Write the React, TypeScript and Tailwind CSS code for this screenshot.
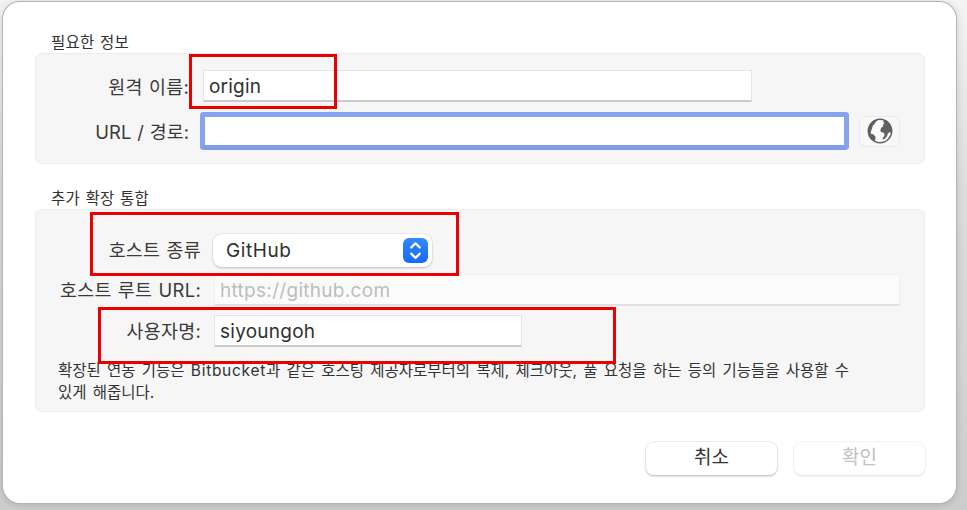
import type { ReactNode } from "react";

function GroupTitle({ children }: { children: ReactNode }) {
  return <h2 className="ml-4 h-[22px] whitespace-pre pt-px text-[15.5px] leading-[22px] tracking-[0.2px] text-[#333] [word-spacing:1px]">{children}</h2>;
}

function Label({ children }: { children: ReactNode }) {
  return <span className="whitespace-pre text-right text-[18.4px] leading-6 tracking-[0.3px] text-[#3a3a3a] [word-spacing:0.8px]">{children}</span>;
}

function Globe() {
  return (
    <svg width="26" height="26" viewBox="0 0 26 26">
      <circle cx="13" cy="13" r="11.7" fill="#fbfbfb" stroke="#606060" strokeWidth="1.5" />
      <path
        d="M9.500 1.800C4.500 3.200 1.300 7.800 1.300 13c0 4.500 2.500 8.500 6.200 10.500L8.600 20.500l-.4-2.200-2.600-2.200-2-.4.4-2.700 1-2.200.8-3 1.400-1.500L8.800 4l2-1.900z"
        fill="#606060"
      />
      <path
        d="M14 1.300l3 1-.8 1.800 1.300 1.200-1.600 1.500.4 1.400-2.100 1.600-.8 2.200.5 2 2.100.5 1.400 1.100-.1 2.300-1.500 2 .3 1.700 1.600-.7 2.400-2.800.6-2.400 1.800-1.800 1.600 1 .5-2.800C24.300 6 19.500 1.300 14 1.300z"
        fill="#606060"
      />
    </svg>
  );
}

export default function App() {
  return (
    <div className="relative flex h-[510px] w-[967px] overflow-hidden bg-[linear-gradient(180deg,#f4f4f4_0%,#dedede_35%,#cdcdcd_100%)] font-['Inter','Noto_Sans_CJK_KR',sans-serif]">
      <main className="ml-[3px] mt-[2px] flex h-[501px] w-[953px] flex-col rounded-[17px] bg-white px-8 pt-[29px] shadow-[0_0_0_1px_#b4b4b4,0_1px_8px_rgba(0,0,0,0.18)]">
        <GroupTitle>필요한 정보</GroupTitle>
        <section className="flex h-[111px] w-[890px] flex-col rounded-[7px] border border-[#ececec] bg-[#f6f6f6] pt-4">
          <div className="flex h-8 items-center">
            <div className="flex w-[153px] justify-end pt-px"><Label>원격 이름:</Label></div>
            <div className="ml-[14px] flex h-8 w-[549px] items-center border border-b-2 border-[#e5e5e5] border-b-[#cacaca] bg-white pl-[5px] pt-[3px] text-[19px] tracking-[0.2px] text-[#303030]">
              <span>origin</span>
            </div>
          </div>
          <div className="mt-[10px] flex h-[38px] items-center">
            <div className="flex w-[153px] justify-end pt-[2px]"><Label><span className="tracking-[0px]">URL / 경로:</span></Label></div>
            <div className="ml-[11px] h-[38px] w-[649px] rounded-[4px] border-[5px] border-[#87a3f0] border-b-[#829ce5] bg-white" />
            <button className="ml-[10px] flex h-[31px] w-[41px] items-center justify-center rounded-[7px] border border-[#eaeaea] bg-[#f8f8f8]">
              <Globe />
            </button>
          </div>
        </section>

        <div className="h-[23px]" />
        <GroupTitle>추가 확장 통합</GroupTitle>
        <section className="flex h-[203px] w-[890px] flex-col rounded-[7px] border border-[#ececec] bg-[#f6f6f6] pt-6">
          <div className="flex h-[33px] items-center">
            <div className="flex w-[165px] justify-end pb-[2px]"><Label>호스트 종류</Label></div>
            <div className="ml-[12px] flex h-[33px] w-[219px] items-center justify-between rounded-[9px] bg-white pl-[13px] pr-[4px] text-[19px] tracking-[0.6px] text-[#303030] shadow-[0_0_0_0.5px_#dedede,0_1px_2px_rgba(0,0,0,0.3)]">
              <span className="pt-px">GitHub</span>
              <span className="flex h-[25px] w-[25px] items-center justify-center rounded-[6px] bg-[linear-gradient(180deg,#3289fb,#1969f7)]">
                <svg width="25" height="25" viewBox="0 0 25 25" fill="none" stroke="white" strokeWidth="2.2" strokeLinecap="round" strokeLinejoin="round">
                  <path d="M8.2 9.500l4.300-4.300 4.300 4.300M8.200 15.600l4.300 4.300 4.300-4.300" />
                </svg>
              </span>
            </div>
          </div>
          <div className="mt-[7px] flex h-8 items-center">
            <div className="flex w-[165px] justify-end"><Label>호스트 루트 URL:</Label></div>
            <div className="ml-[13px] flex h-8 w-[686px] items-center border border-b-2 border-[#f0f0f0] border-b-[#e1e1e1] bg-[#fbfbfb] pl-[5px] pt-[3px] text-[19px] tracking-[0.3px] text-[#bdbdbd]">
              <span>https://github.com</span>
            </div>
          </div>
          <div className="mt-[9px] flex h-8 items-center">
            <div className="flex w-[165px] justify-end"><Label>사용자명:</Label></div>
            <div className="ml-[13px] flex h-8 w-[308px] items-center border border-b-2 border-[#e5e5e5] border-b-[#cacaca] bg-white pl-[5px] pt-[3px] text-[19px] tracking-[0.25px] text-[#303030]">
              <span>siyoungoh</span>
            </div>
          </div>
          <p className="ml-[22px] mt-[13px] whitespace-pre text-[15.5px] leading-[22px] text-[#333] [word-spacing:1.9px]">
            <span className="block">확장된 연동 기능은 <span className="tracking-[0.7px]">Bitbucket</span>과 같은 호스팅 제공자로부터의 복제, 체크아웃, 풀 요청을 하는 등의 기능들을 사용할 수</span>
            <span className="block">있게 해줍니다.</span>
          </p>
        </section>

        <footer className="mt-[30px] flex h-[33px] w-[890px] justify-end gap-[17px] text-[19px]">
          <button className="flex w-[131px] items-center justify-center rounded-[8px] bg-white text-[#333] shadow-[0_0_0_0.5px_#dedede,0_1px_2px_rgba(0,0,0,0.35)]">취소</button>
          <button className="flex w-[131px] items-center justify-center rounded-[8px] bg-white text-[#c1c1c1] shadow-[0_0_0_0.5px_#eaeaea,0_1px_2px_rgba(0,0,0,0.16)]">확인</button>
        </footer>
      </main>

      <div className="pointer-events-none absolute left-[189px] top-[54px] h-[55px] w-[148px] border-[3px] border-[#ea0000]" />
      <div className="pointer-events-none absolute left-[90px] top-[212px] h-[64px] w-[369px] border-[3px] border-[#ea0000]" />
      <div className="pointer-events-none absolute left-[98px] top-[307px] h-[57px] w-[518px] border-[3px] border-[#ea0000]" />
    </div>
  );
}
